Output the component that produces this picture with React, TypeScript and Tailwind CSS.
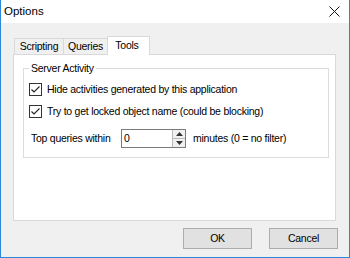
import { ReactNode } from 'react';

function Check({ children }: { children: ReactNode }) {
  return (
    <div className="flex items-center h-[16px] gap-[5px]">
      <svg width="13" height="13" viewBox="0 0 13 13" className="shrink-0">
        <rect x="0.5" y="0.5" width="12" height="12" fill="#fff" stroke="#333" />
        <path d="M2.5 6.5 L5 9 L10.5 3.5" fill="none" stroke="#222" strokeWidth="1.1" />
      </svg>
      <span>{children}</span>
    </div>
  );
}

export default function App() {
  return (
    <div className="w-[350px] h-[258px] flex flex-col border-x border-b border-[#2b88d8] bg-[#f0f0f0] text-black font-['Liberation_Sans',Arial,sans-serif] text-[10.5px] tracking-[-0.25px] leading-[13px]">
      {/* title bar */}
      <div className="h-[23px] shrink-0 bg-white flex items-center justify-between pl-[3px] pr-[9px]">
        <span className="text-[11.5px] tracking-normal">Options</span>
        <svg width="11" height="11" viewBox="0 0 11 11">
          <path d="M0.5 0.5 L10.5 10.5 M10.5 0.5 L0.5 10.5" stroke="#111" strokeWidth="1" />
        </svg>
      </div>

      <div className="flex-1 flex flex-col pt-[13px] pl-[12px] pr-[11px] pb-[8px]">
        {/* tabs */}
        <div className="relative z-10 flex items-end h-[19px] -mb-px pl-[1px]">
          <div className="w-[50px] h-[17px] flex items-center justify-center border border-[#d9d9d9] bg-[#f0f0f0]">Scripting</div>
          <div className="w-[45px] h-[17px] -ml-px flex items-center justify-center border border-[#d9d9d9] bg-[#f0f0f0]">Queries</div>
          <div className="w-[43px] h-[19px] -ml-px flex items-start justify-center pt-[2px] pr-[3px] border-x border-t border-[#d9d9d9] bg-white">Tools</div>
        </div>

        {/* tab panel */}
        <div className="h-[167px] mr-[2px] bg-white border border-[#d9d9d9] pt-[7px] pl-[9px] pr-[6px]">
          <fieldset className="border border-[#dcdcdc] pl-[5px] pb-[9px]">
            <legend className="px-[2px]">Server Activity</legend>
            <div className="mt-[6px] flex flex-col gap-[6px]">
              <Check>Hide activities generated by this application</Check>
              <Check>Try to get locked object name (could be blocking)</Check>
            </div>
            <div className="mt-[10px] ml-[2px] flex items-center h-[19px]">
              <span className="w-[90px]">Top queries within</span>
              <div className="w-[65px] h-[19px] flex border border-[#7a7a7a] bg-white">
                <span className="flex-1 pl-[2px] leading-[17px]">0</span>
                <div className="w-[13px] flex flex-col border-l border-[#b9b9b9]">
                  <div className="flex-1 flex items-center justify-center bg-[#f0f0f0] border-b border-[#b9b9b9]">
                    <svg width="7" height="4" viewBox="0 0 7 4"><path d="M0 4 L3.5 0 L7 4 Z" fill="#333" /></svg>
                  </div>
                  <div className="flex-1 flex items-center justify-center bg-[#f0f0f0]">
                    <svg width="7" height="4" viewBox="0 0 7 4"><path d="M0 0 L3.5 4 L7 0 Z" fill="#333" /></svg>
                  </div>
                </div>
              </div>
              <span className="ml-[7px]">minutes (0 = no filter)</span>
            </div>
          </fieldset>
        </div>

        {/* buttons */}
        <div className="mt-[7px] flex justify-end gap-[17px]">
          <button className="w-[69px] h-[21px] border border-[#adadad] bg-[#e1e1e1]">OK</button>
          <button className="w-[69px] h-[21px] border border-[#adadad] bg-[#e1e1e1]">Cancel</button>
        </div>
      </div>
    </div>
  );
}
